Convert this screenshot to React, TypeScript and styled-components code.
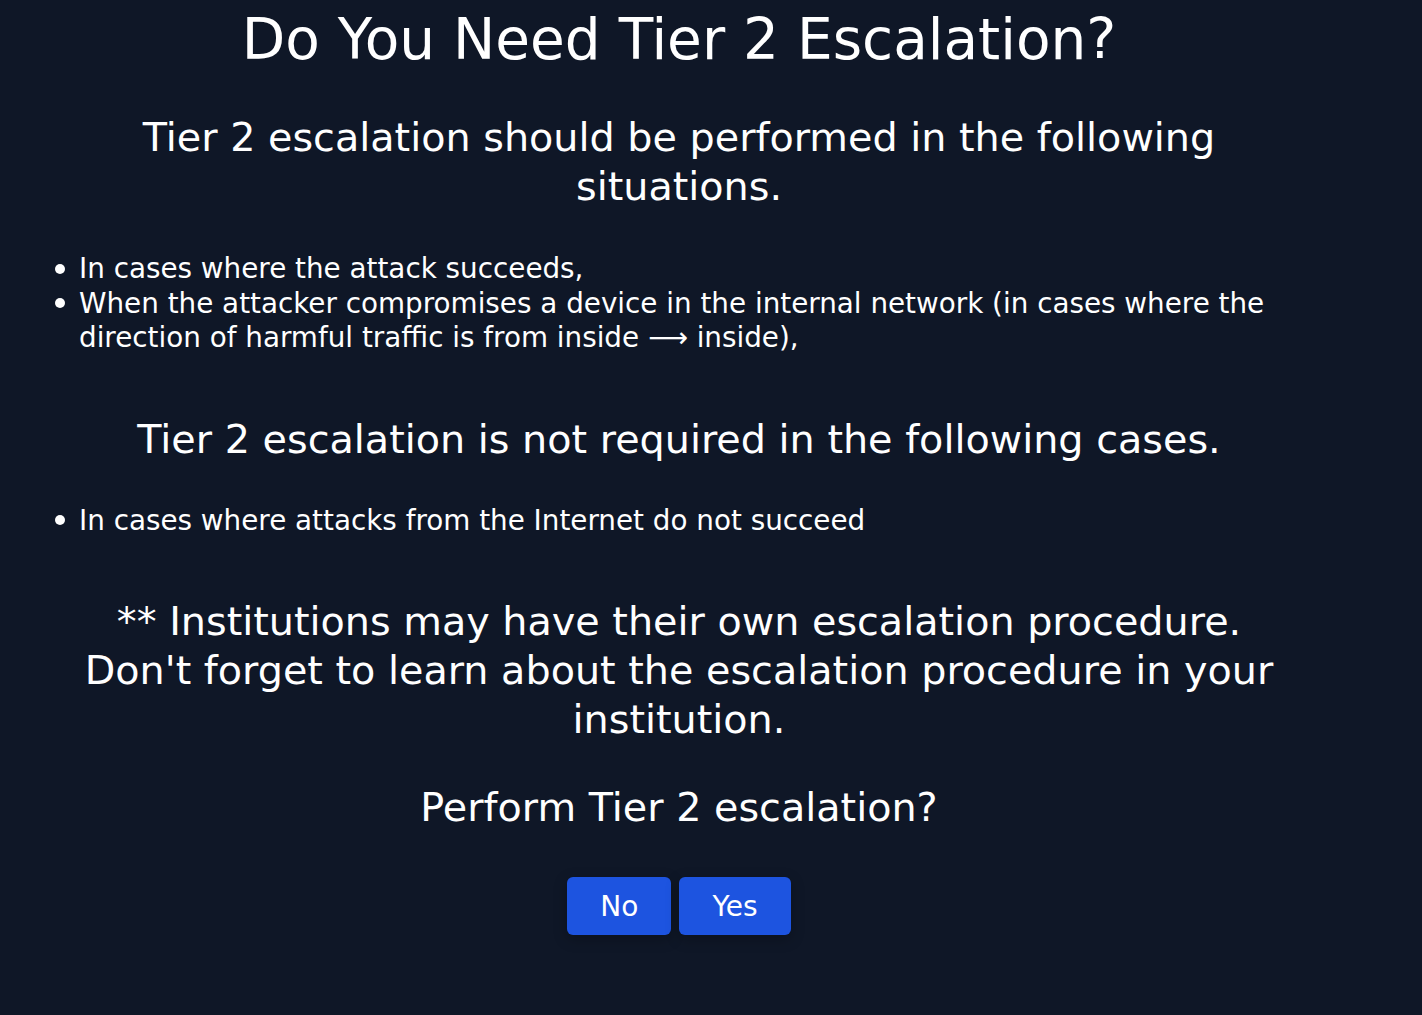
import React from "react";
import styled, { createGlobalStyle } from "styled-components";

const Global = createGlobalStyle`
  html, body { margin: 0; padding: 0; background: #0f1727; }
  body { font-family: "DejaVu Sans", Verdana, sans-serif; color: #ffffff; }
  * { box-sizing: border-box; }
`;

const Page = styled.div`
  min-height: 1015px;
  background: #0f1727;
  padding: 10px 0 40px 39px;
`;

const Container = styled.main`
  width: 1280px;
  display: flex;
  flex-direction: column;
  align-items: stretch;
`;

const Title = styled.h1`
  margin: 0;
  font-size: 56.5px;
  line-height: 60px;
  font-weight: 400;
  text-align: center;
`;

const Heading = styled.h2<{ $top: number }>`
  margin: ${(p) => p.$top}px 0 0;
  font-size: 39.7px;
  line-height: 49px;
  font-weight: 400;
  text-align: center;
`;

const List = styled.ul<{ $top: number }>`
  margin: ${(p) => p.$top}px 0 0;
  padding: 0 0 0 40px;
  list-style: none;
  font-size: 27.8px;
  line-height: 34.5px;
  text-align: left;
`;

const Item = styled.li`
  position: relative;

  &::before {
    content: "";
    position: absolute;
    left: -24px;
    top: 11.5px;
    width: 10px;
    height: 10px;
    border-radius: 50%;
    background: #ffffff;
  }
`;

const Actions = styled.div`
  margin-top: 45px;
  display: flex;
  justify-content: center;
  gap: 8px;
`;

const Button = styled.button`
  height: 58px;
  padding: 0 33px;
  border: none;
  border-radius: 6px;
  background: #1d54e0;
  color: #ffffff;
  font-family: "DejaVu Sans", Verdana, sans-serif;
  font-size: 28px;
  font-weight: 400;
  box-shadow: 0 4px 14px rgba(0, 0, 0, 0.25);
  cursor: pointer;
`;

export default function App() {
  return (
    <>
      <Global />
      <Page>
        <Container>
          <Title>Do You Need Tier 2 Escalation?</Title>
          <Heading $top={43}>
            Tier 2 escalation should be performed in the following situations.
          </Heading>
          <List $top={41}>
            <Item>In cases where the attack succeeds,</Item>
            <Item>
              When the attacker compromises a device in the internal network (in
              cases where the direction of harmful traffic is from inside ⟶ inside),
            </Item>
          </List>
          <Heading $top={59}>Tier 2 escalation is not required in the following cases.</Heading>
          <List $top={40}>
            <Item>In cases where attacks from the Internet do not succeed</Item>
          </List>
          <Heading $top={59}>
            ** Institutions may have their own escalation procedure.
            <br />
            Don't forget to learn about the escalation procedure in your institution.
          </Heading>
          <Heading $top={39}>Perform Tier 2 escalation?</Heading>
          <Actions>
            <Button>No</Button>
            <Button>Yes</Button>
          </Actions>
        </Container>
      </Page>
    </>
  );
}
